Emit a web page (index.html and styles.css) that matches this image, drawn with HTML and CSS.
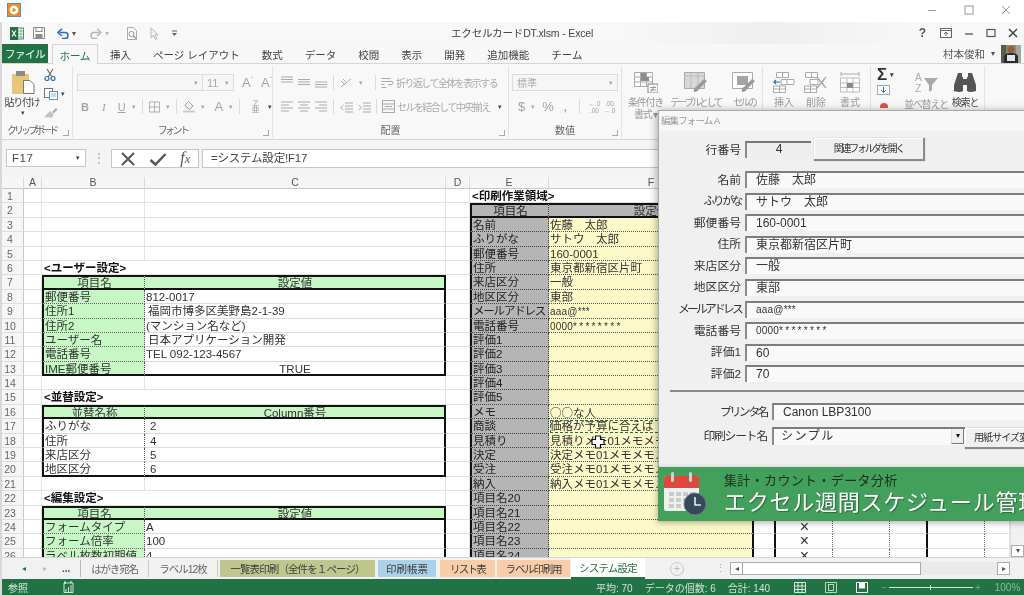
FILE: index.html
```html
<!DOCTYPE html>
<html lang="ja">
<head>
<meta charset="utf-8">
<title>エクセルカードDT.xlsm - Excel</title>
<link rel="stylesheet" href="styles.css">
</head>
<body>
<div class="app">
  <header class="topbar">
    <svg class="appicon" width="14" height="14" viewBox="0 0 14 14"><rect x=".5" y=".5" width="13" height="13" fill="#f08a24" stroke="#5a8fc0"/><circle cx="7" cy="7" r="4.4" fill="#fff"/><path d="M5.6 4.6 9.4 7 5.6 9.4z" fill="#f08a24"/></svg>
    <div class="wincontrols">
      <svg width="10" height="10" viewBox="0 0 10 10"><path d="M1 5.5h8" stroke="#999"/></svg>
      <svg width="10" height="10" viewBox="0 0 10 10"><rect x="1" y="1" width="8" height="8" fill="none" stroke="#999"/></svg>
      <svg width="10" height="10" viewBox="0 0 10 10"><path d="M1 1l8 8M9 1l-8 8" stroke="#999"/></svg>
    </div>
  </header>

  <main class="excel">
    <div class="qat">
      <svg class="q-xl" width="14" height="13" viewBox="0 0 14 13"><rect x="5" y="1" width="8.5" height="11" fill="#fff" stroke="#217346" stroke-width=".8"/><path d="M8 1v11M11 1v11M5 4h8M5 7h8M5 10h8" stroke="#217346" stroke-width=".5"/><rect x="0" y="0" width="8" height="13" fill="#217346"/><path d="M2 3.5l4 6M6 3.5l-4 6" stroke="#fff" stroke-width="1.2"/></svg>
      <svg class="q-save" width="12" height="12" viewBox="0 0 12 12"><path d="M.5.5h11v11H.5z" fill="none" stroke="#8c8c8c"/><rect x="3" y=".5" width="6" height="4" fill="none" stroke="#8c8c8c"/><rect x="2.5" y="7" width="7" height="4.5" fill="#8c8c8c"/></svg>
      <svg class="q-undo" width="12" height="11" viewBox="0 0 12 11"><path d="M2.5 4.5H8a3 3 0 0 1 0 6H5" fill="none" stroke="#2a6fb0" stroke-width="1.6"/><path d="M5 .8 1 4.5 5 8" fill="none" stroke="#2a6fb0" stroke-width="1.6"/></svg>
      <span class="q-arrow dark">▾</span>
      <svg class="q-redo" width="12" height="11" viewBox="0 0 12 11"><path d="M9.5 4.5H4a3 3 0 0 0 0 6h3" fill="none" stroke="#b5b5b5" stroke-width="1.4"/><path d="M7 .8l4 3.7L7 8" fill="none" stroke="#b5b5b5" stroke-width="1.4"/></svg>
      <span class="q-arrow">▾</span>
      <svg class="q-prev" width="12" height="13" viewBox="0 0 12 13"><path d="M1.5.5h6l3 3v9h-9z" fill="none" stroke="#aaa"/><circle cx="5.5" cy="7" r="2.6" fill="none" stroke="#999"/><path d="M7.5 9l2.500 2.500" stroke="#999" stroke-width="1.400"/></svg>
      <svg class="q-cur" width="9" height="13" viewBox="0 0 9 13"><path d="M1 .8v10l2.500-2.300 2 4 1.400-.8-2-3.800H8z" fill="#f4f4f4" stroke="#aaa" stroke-width=".8"/></svg>
      <svg class="q-cust" width="7" height="7" viewBox="0 0 7 7"><path d="M1 1h5" stroke="#666"/><path d="M1 3h5L3.500 6z" fill="#666"/></svg>
      <span class="doctitle">エクセルカードDT.xlsm - Excel</span>
      <div class="qat-right">
        <b class="help">?</b>
        <svg width="12" height="10" viewBox="0 0 12 10"><rect x=".5" y=".5" width="11" height="9" fill="none" stroke="#666"/><path d="M.5 2.500h11" stroke="#666"/><path d="M6 8V4.500M4 6l2-2 2 2" fill="none" stroke="#666"/></svg>
        <svg width="10" height="10" viewBox="0 0 10 10"><path d="M1 6h8" stroke="#555" stroke-width="1.300"/></svg>
        <svg width="10" height="10" viewBox="0 0 10 10"><rect x="1" y="1.500" width="8" height="7" fill="none" stroke="#555" stroke-width="1.200"/></svg>
        <svg width="10" height="10" viewBox="0 0 10 10"><path d="M1 1l8 8M9 1l-8 8" stroke="#444" stroke-width="1.500"/></svg>
      </div>
    </div>

    <nav class="tabs">
      <span class="tab-file">ファイル</span>
      <span class="tab tab-on">ホーム</span>
      <span class="tab">挿入</span>
      <span class="tab">ページ レイアウト</span>
      <span class="tab">数式</span>
      <span class="tab">データ</span>
      <span class="tab">校閲</span>
      <span class="tab">表示</span>
      <span class="tab">開発</span>
      <span class="tab">追加機能</span>
      <span class="tab">チーム</span>
      <div class="user">
        <span>村本俊和</span><span class="usr-arrow">▾</span>
        <svg width="20" height="18" viewBox="0 0 20 18"><rect width="20" height="18" fill="#8a8a70"/><rect x="0" width="5" height="18" fill="#55604a"/><rect x="15" width="5" height="18" fill="#a0a8a0"/><circle cx="10" cy="4.500" r="3.500" fill="#8d6244"/><path d="M3 18V11q1-3 7-3t7 3v7z" fill="#2b2b2b"/><rect x="6" y="10" width="8" height="6" fill="#e6e6e6"/></svg>
      </div>
    </nav>

    <section class="ribbon">
      <div class="grp g-clip">
        <div class="grp-body clip">
          <div class="paste">
            <svg width="24" height="23" viewBox="0 0 24 23"><rect x="1" y="3" width="17" height="20" fill="#e8c678"/><rect x="5" y="0" width="9" height="5" fill="#8a8a8a"/><path d="M12.500 9.500h6.500l4 4v9H12.500z" fill="#fff" stroke="#777"/></svg>
            <span class="paste-l">貼り付け</span>
            <span class="mini dark">▾</span>
          </div>
          <div class="clip-tools">
            <svg width="12" height="12" viewBox="0 0 12 12"><path d="M3 0l5 8M9 0 4 8" stroke="#666" stroke-width="1.100"/><circle cx="3" cy="9.500" r="2" fill="none" stroke="#2a6fb0" stroke-width="1.200"/><circle cx="9" cy="9.500" r="2" fill="none" stroke="#2a6fb0" stroke-width="1.200"/></svg>
            <span class="copy"><svg width="14" height="12" viewBox="0 0 14 12"><rect x=".5" y=".5" width="8" height="9" fill="#fff" stroke="#777"/><rect x="5.500" y="3.500" width="8" height="8" fill="#fff" stroke="#5a8fc0"/><path d="M7 6h5M7 8h5" stroke="#5a8fc0" stroke-width=".7"/></svg><span class="mini dark">▾</span></span>
            <svg width="14" height="12" viewBox="0 0 14 12"><path d="M8 5 12 1l1.500 1.500L9.500 6.500z" fill="#aaa"/><path d="M1 9l5-5 4 4-3 3-3-1-2 1z" fill="#c2c2c2"/></svg>
          </div>
        </div>
        <div class="grp-label lab-clip"><span class="tk2">クリップボード</span><i class="launch"></i></div>
      </div>

      <div class="grp g-font">
        <div class="grp-body stack">
          <div class="line">
            <span class="combo c-font"><span class="mini">▾</span></span><span class="combo c-size">11<span class="mini">▾</span></span>
            <span class="glyph big a1">A<sup>ˆ</sup></span><span class="glyph big a2">A<sup>ˇ</sup></span>
          </div>
          <div class="line l2">
            <b class="glyph m-b">B</b><i class="glyph ser m-i">I</i><u class="glyph m-u">U</u><span class="mini m-ua">▾</span><span class="vsep"></span>
            <svg class="m-b2" width="12" height="12" viewBox="0 0 12 12"><path d="M.5.5h11v11H.5zM6 .5v11M.5 6h11" fill="none" stroke="#aaa"/></svg><span class="mini m-a">▾</span><span class="vsep"></span>
            <svg class="m-f" width="14" height="13" viewBox="0 0 14 13"><path d="M6 1l5 5-4 4-5-5z" fill="#eee" stroke="#999"/><rect x="0" y="11" width="13" height="2" fill="#c9c9c9"/></svg><span class="mini m-a">▾</span>
            <span class="glyph big m-c">A</span><span class="mini m-a">▾</span><span class="vsep"></span>
            <span class="ruby"><small>ア</small>亜</span><span class="mini dark m-a">▾</span>
          </div>
        </div>
        <div class="grp-label"><span class="tk2">フォント</span><i class="launch"></i></div>
      </div>

      <div class="grp g-align">
        <div class="grp-body stack">
          <div class="line">
            <svg class="m-al" width="12" height="12" viewBox="0 0 12 12"><path d="M0 1h12M0 3.500h12M0 6h12" stroke="#aaa"/></svg>
            <svg class="m-al" width="12" height="12" viewBox="0 0 12 12"><path d="M0 3.500h12M0 6h12M0 8.500h12" stroke="#aaa"/></svg>
            <svg class="m-al" width="12" height="12" viewBox="0 0 12 12"><path d="M0 6h12M0 8.500h12M0 11h12" stroke="#aaa"/></svg>
            <span class="vsep v2"></span>
            <svg class="m-or" width="13" height="12" viewBox="0 0 13 12"><path d="M1 10 11 2M3 2l3 3M1 4l4 4" stroke="#aaa"/></svg><span class="mini m-a">▾</span>
            <span class="vsep v3"></span>
            <svg class="m-wr" width="13" height="12" viewBox="0 0 13 12"><path d="M.5 1.500h9M.5 4.500h11q1.500 2-1 3H7M.5 7.500h3M.5 10.500h5" fill="none" stroke="#aaa"/></svg>
            <span class="rb-txt">折り返して全体を表示する</span>
          </div>
          <div class="line l2">
            <svg class="m-al" width="12" height="12" viewBox="0 0 12 12"><path d="M0 2h12M0 5h8M0 8h12M0 11h8" stroke="#aaa"/></svg>
            <svg class="m-al" width="12" height="12" viewBox="0 0 12 12"><path d="M0 2h12M2 5h8M0 8h12M2 11h8" stroke="#aaa"/></svg>
            <svg class="m-al" width="12" height="12" viewBox="0 0 12 12"><path d="M0 2h12M4 5h8M0 8h12M4 11h8" stroke="#aaa"/></svg>
            <span class="vsep v2"></span>
            <svg class="m-or" width="13" height="12" viewBox="0 0 13 12"><path d="M5 2h8M5 5h8M5 8h8M5 11h8M3.500 4 .5 6.500l3 2.500" fill="none" stroke="#aaa"/></svg>
            <svg class="m-in" width="13" height="12" viewBox="0 0 13 12"><path d="M5 2h8M5 5h8M5 8h8M5 11h8M.5 4l3 2.500-3 2.500" fill="none" stroke="#aaa"/></svg>
            <span class="vsep v4"></span>
            <svg class="m-wr" width="13" height="13" viewBox="0 0 13 13"><rect x=".5" y=".5" width="12" height="12" fill="none" stroke="#aaa"/><path d="M.5 4h12M.5 9h12M3 6.500h7" stroke="#aaa"/></svg>
            <span class="rb-txt">セルを結合して中央揃え</span><span class="mini dark m-mg">▾</span>
          </div>
        </div>
        <div class="grp-label">配置<i class="launch"></i></div>
      </div>

      <div class="grp g-num">
        <div class="grp-body stack">
          <div class="line"><span class="combo c-num">標準<span class="mini">▾</span></span></div>
          <div class="line l2 nums">
            <span class="glyph big">$</span><span class="mini n-a">▾</span><span class="glyph big n-p">%</span><b class="glyph n-c">,</b><span class="vsep n-s"></span>
            <span class="dec">←.0<br>.00</span><span class="dec">.00<br>→.0</span>
          </div>
        </div>
        <div class="grp-label">数値<i class="launch"></i></div>
      </div>

      <div class="grp g-style">
        <div class="big-btns">
          <div class="bbtn b-c">
            <svg width="24" height="21" viewBox="0 0 24 21"><path d="M.5.5h18v14H.5zM6.500.5v14M12.500.5v14M.5 5h18M.5 10h18" fill="#fff" stroke="#aaa"/><rect x="7" y="1" width="5" height="4" fill="#8d8d8d"/><rect x="7" y="5" width="8" height="4" fill="#8d8d8d"/><rect x="14" y="12" width="10" height="9" fill="#f7f7f7" stroke="#888"/><path d="M16 15.500h6M16 18h6M20.500 14l-3 5.500" stroke="#777" stroke-width=".7"/></svg>
            <span class="tk1">条件付き<br>書式 ▾</span>
          </div>
          <div class="bbtn b-t">
            <svg width="24" height="21" viewBox="0 0 24 21"><path d="M.5.500h20v16H.5z" fill="#d8d8d8" stroke="#aaa"/><path d="M.5 4h20M7 .5v16M14 .5v16" stroke="#bbb"/><path d="M10 20q4 0 5-3l8-8-3-2-8 8q-3 1-2 5z" fill="#999"/></svg>
            <span class="tk3">テーブルとして</span>
          </div>
          <div class="bbtn b-s">
            <svg width="24" height="21" viewBox="0 0 24 21"><path d="M.5.500h20v16H.5z" fill="#fff" stroke="#aaa"/><rect x="5" y="4" width="11" height="9" fill="#a5a5a5"/><path d="M10 20q4 0 5-3l8-8-3-2-8 8q-3 1-2 5z" fill="#999"/></svg>
            <span class="tk3">セルの</span>
          </div>
        </div>
      </div>

      <div class="grp g-cells">
        <div class="big-btns">
          <div class="bbtn c-i">
            <svg width="22" height="21" viewBox="0 0 22 21"><path d="M3.500.5h12v5h-12zM9.500.5v5M.5 14h12v6.500H.5zM6.500 14v6.500M.5 17h12M8 7.500h13v5H8zM14 7.500v5" fill="#fff" stroke="#aaa"/><path d="M7 10H1M3 8l-2 2 2 2" fill="none" stroke="#2a6fb0" stroke-width="1.200"/></svg>
            <span>挿入</span>
          </div>
          <div class="bbtn c-d">
            <svg width="24" height="21" viewBox="0 0 24 21"><path d="M1.500.5h12v5h-12zM7.500.5v5M.5 14h12v6.500H.5zM6.500 14v6.500M.5 17h12M6 7.500h8v5H6z" fill="#fff" stroke="#aaa"/><path d="M13 5l9 11M22 5l-9 11" stroke="#aaa" stroke-width="1.400"/></svg>
            <span>削除</span>
          </div>
          <div class="bbtn c-f">
            <svg width="22" height="21" viewBox="0 0 22 21"><path d="M1.500 6h19v14h-19zM8 6v14M14 6v14M1.500 11h19M1.500 15.500h19" fill="#fff" stroke="#bbb"/><rect x="8" y="11" width="6" height="5" fill="#8a8a8a"/><path d="M2 2h18M2 0v4M20 0v4" stroke="#aaa"/></svg>
            <span>書式</span>
          </div>
        </div>
      </div>

      <div class="grp g-edit">
        <div class="edit-col">
          <span class="sigma">Σ<span class="mini dark">▾</span></span>
          <svg width="13" height="10" viewBox="0 0 13 10"><rect x=".5" y=".5" width="12" height="9" fill="#fff" stroke="#aaa"/><path d="M6.500 2v5M4 5l2.500 2.500L9 5" fill="none" stroke="#2a6fb0"/></svg>
          <svg class="eraser" width="10" height="6" viewBox="0 0 10 6"><circle cx="5" cy="5" r="4" fill="#d9534f"/></svg>
        </div>
        <div class="bbtn e-s">
          <svg width="24" height="24" viewBox="0 0 24 24"><path d="M10 5h14l-6 7v5l-3 2v-7z" fill="#aaa"/></svg>
          <span class="az">A<br>Z</span>
          <span class="tk1">並べ替えと</span>
        </div>
        <div class="bbtn e-f">
          <svg width="24" height="21" viewBox="0 0 24 21"><path d="M5 1h4v4h1v14q-3 2-9 0l0-6zM19 1h-4v4h-1v14q3 2 9 0v-6z" fill="#555"/><rect x="10" y="7" width="4" height="6" fill="#555"/></svg>
          <span class="tk1">検索と</span>
        </div>
      </div>
    </section>

    <section class="fbar">
      <div class="namebox"><span>F17</span><span class="mini dark">▾</span></div>
      <span class="dots">⋮</span>
      <div class="fbtns">
        <svg width="16" height="14" viewBox="0 0 16 14"><path d="M2 1l12 12M14 1 2 13" stroke="#555" stroke-width="2"/></svg>
        <svg width="18" height="14" viewBox="0 0 18 14"><path d="M1.500 8l5 4.500L16.500 2" fill="none" stroke="#555" stroke-width="2.500"/></svg>
        <span class="fx"><i>f</i><i class="x">x</i></span>
      </div>
      <div class="finput">=システム設定!F17</div>
    </section>

    <section class="sheetwrap">
      <div class="sheet">
        <div class="row chead"><span class="corner"></span><span>A</span><span>B</span><span>C</span><span>D</span><span>E</span><span>F</span><span></span><span></span><span></span><span></span><span></span><span></span></div>

        <div class="row"><span class="rh">1</span><span></span><span></span><span></span><span></span><span class="bold ov">&lt;印刷作業領域&gt;</span><span></span></div>
        <div class="row"><span class="rh">2</span><span></span><span></span><span></span><span></span><span class="el eh">項目名</span><span class="ev eh">設定値</span></div>
        <div class="row"><span class="rh">3</span><span></span><span></span><span></span><span></span><span class="el">名前</span><span class="ev">佐藤　太郎</span></div>
        <div class="row"><span class="rh">4</span><span></span><span></span><span></span><span></span><span class="el">ふりがな</span><span class="ev">サトウ　太郎</span></div>
        <div class="row"><span class="rh">5</span><span></span><span></span><span></span><span></span><span class="el">郵便番号</span><span class="ev">160-0001</span></div>
        <div class="row"><span class="rh">6</span><span></span><span class="bold ov">&lt;ユーザー設定&gt;</span><span></span><span></span><span class="el">住所</span><span class="ev">東京都新宿区片町</span></div>
        <div class="row"><span class="rh">7</span><span></span><span class="gl gh">項目名</span><span class="gv gh">設定値</span><span></span><span class="el">来店区分</span><span class="ev">一般</span></div>
        <div class="row"><span class="rh">8</span><span></span><span class="gl">郵便番号</span><span class="gv">812-0017</span><span></span><span class="el">地区区分</span><span class="ev">東部</span></div>
        <div class="row"><span class="rh">9</span><span></span><span class="gl">住所1</span><span class="gv ind">福岡市博多区美野島2-1-39</span><span></span><span class="el tight">メールアドレス</span><span class="ev sm">aaa@***</span></div>
        <div class="row"><span class="rh">10</span><span></span><span class="gl">住所2</span><span class="gv">(マンション名など)</span><span></span><span class="el">電話番号</span><span class="ev sm">0000<span class="stars">********</span></span></div>
        <div class="row"><span class="rh">11</span><span></span><span class="gl">ユーザー名</span><span class="gv ind">日本アプリケーション開発</span><span></span><span class="el">評価1</span><span class="ev"></span></div>
        <div class="row"><span class="rh">12</span><span></span><span class="gl">電話番号</span><span class="gv">TEL 092-123-4567</span><span></span><span class="el">評価2</span><span class="ev"></span></div>
        <div class="row"><span class="rh">13</span><span></span><span class="gl end">IME郵便番号</span><span class="gv end ctr">TRUE</span><span></span><span class="el">評価3</span><span class="ev"></span></div>
        <div class="row"><span class="rh">14</span><span></span><span></span><span></span><span></span><span class="el">評価4</span><span class="ev"></span></div>
        <div class="row"><span class="rh">15</span><span></span><span class="bold ov">&lt;並替設定&gt;</span><span></span><span></span><span class="el">評価5</span><span class="ev"></span></div>
        <div class="row"><span class="rh">16</span><span></span><span class="gl gh">並替名称</span><span class="gv gh">Column番号</span><span></span><span class="el">メモ</span><span class="ev cjk">○○な人</span></div>
        <div class="row"><span class="rh">17</span><span></span><span class="wl">ふりがな</span><span class="gv ind2">2</span><span></span><span class="el">商談</span><span class="ev ants">価格が予算に合えば</span></div>
        <div class="row"><span class="rh">18</span><span></span><span class="wl">住所</span><span class="gv ind2">4</span><span></span><span class="el">見積り</span><span class="ev">見積りメモ01メモメモメモ</span></div>
        <div class="row"><span class="rh">19</span><span></span><span class="wl">来店区分</span><span class="gv ind2">5</span><span></span><span class="el">決定</span><span class="ev">決定メモ01メモメモメモ</span></div>
        <div class="row"><span class="rh">20</span><span></span><span class="wl end">地区区分</span><span class="gv end ind2">6</span><span></span><span class="el">受注</span><span class="ev">受注メモ01メモメモメモ</span></div>
        <div class="row"><span class="rh">21</span><span></span><span></span><span></span><span></span><span class="el">納入</span><span class="ev">納入メモ01メモメモメモ</span></div>
        <div class="row"><span class="rh">22</span><span></span><span class="bold ov">&lt;編集設定&gt;</span><span></span><span></span><span class="el">項目名20</span><span class="ev"></span></div>
        <div class="row"><span class="rh">23</span><span></span><span class="gl gh">項目名</span><span class="gv gh">設定値</span><span></span><span class="el">項目名21</span><span class="ev"></span></div>
        <div class="row"><span class="rh">24</span><span></span><span class="gl">フォームタイプ</span><span class="gv">A</span><span></span><span class="el">項目名22</span><span class="ev"></span><span class="kb"></span><span class="kc">×</span><span class="kd"></span><span class="ke"></span><span class="kf"></span><span></span></div>
        <div class="row"><span class="rh">25</span><span></span><span class="gl">フォーム倍率</span><span class="gv">100</span><span></span><span class="el">項目名23</span><span class="ev"></span><span class="kb"></span><span class="kc">×</span><span class="kd"></span><span class="ke"></span><span class="kf"></span><span></span></div>
        <div class="row"><span class="rh">26</span><span></span><span class="gl">ラベル枚数初期値</span><span class="gv">4</span><span></span><span class="el">項目名24</span><span class="ev"></span><span class="kb"></span><span class="kc">×</span><span class="kd"></span><span class="ke"></span><span class="kf"></span><span></span></div>
      </div>
      <div class="vscroll"><span class="vs-down">▾</span></div>
    </section>

    <section class="sheettabs">
      <div class="nav"><span class="nav-l">◂</span><span class="nav-r">▸</span><span class="nav-d">...</span></div>
      <span class="st st-1">はがき宛名</span>
      <span class="st st-2">ラベル12枚</span>
      <span class="st st-3">一覧表印刷（全件を１ページ）</span>
      <span class="st st-4">印刷帳票</span>
      <span class="st st-5">リスト表</span>
      <span class="st st-6">ラベル印刷用</span>
      <span class="st st-7">システム設定</span>
      <span class="st-add">+</span>
      <span class="st-dots">⋮</span>
      <div class="hscroll"><span class="hs-btn">◂</span><span class="hs-thumb"></span><span class="hs-btn end-btn">▸</span></div>
    </section>

    <footer class="status">
      <span class="s-ref">参照</span>
      <svg class="s-mac" width="11" height="12" viewBox="0 0 11 12"><path d="M1 2h9v9.500H1z" fill="none" stroke="#cfe3d6"/><path d="M3 8v3M5.500 6v5M8 4v7" stroke="#cfe3d6"/><path d="M2 0v3M8 0v2" stroke="#fff"/></svg>
      <span class="s-sum s-a">平均: 70</span><span class="s-sum">データの個数: 6</span><span class="s-sum">合計: 140</span>
      <svg class="s-v1" width="12" height="11" viewBox="0 0 12 11"><path d="M.5.5h11v10H.5zM4 .5v10M8 .5v10M.5 4h11M.5 7.500h11" fill="none" stroke="#dbe9e0"/></svg>
      <svg class="s-v2" width="12" height="11" viewBox="0 0 12 11"><path d="M.5.5h11v10H.5z" fill="none" stroke="#bcd5c6"/><rect x="3.500" y="2.500" width="5" height="6" fill="none" stroke="#bcd5c6"/></svg>
      <svg class="s-v3" width="12" height="11" viewBox="0 0 12 11"><path d="M.5.5h11v10H.5z" fill="#217346" stroke="#fff"/><rect x="3" y=".5" width="6" height="6" fill="#fff"/></svg>
      <div class="zoom"><span>−</span><span class="z-line"><i></i></span><span>+</span></div>
      <span class="s-pct">100%</span>
    </footer>
  </main>

  <aside class="form">
    <div class="form-title">編集フォーム A</div>
    <div class="form-body">
      <div class="frow f-first"><label>行番号</label><span class="field ro">4</span><span class="btn b-folder">関連フォルダを開く</span></div>
      <div class="frow"><label>名前</label><span class="field">佐藤　太郎</span></div>
      <div class="frow"><label class="tk-kana">ふりがな</label><span class="field">サトウ　太郎</span></div>
      <div class="frow"><label>郵便番号</label><span class="field">160-0001</span></div>
      <div class="frow"><label>住所</label><span class="field">東京都新宿区片町</span></div>
      <div class="frow"><label>来店区分</label><span class="field">一般</span></div>
      <div class="frow"><label>地区区分</label><span class="field">東部</span></div>
      <div class="frow"><label class="tk-mail">メールアドレス</label><span class="field sm">aaa@***</span></div>
      <div class="frow"><label>電話番号</label><span class="field sm">0000<span class="stars">********</span></span></div>
      <div class="frow"><label>評価1</label><span class="field">60</span></div>
      <div class="frow f-last"><label>評価2</label><span class="field">70</span></div>
      <hr class="fsep">
      <div class="frow f-p"><label class="tk-print">プリンタ名</label><span class="field">Canon LBP3100</span></div>
      <div class="frow f-p f-s"><label class="tk-sheet">印刷シート名</label><span class="field f-combo">シンプル<span class="drop">▾</span></span><span class="btn b-paper">用紙サイズ変更</span></div>
    </div>
  </aside>

  <aside class="banner">
    <svg width="44" height="44" viewBox="0 0 44 44"><rect x="1" y="4" width="35" height="35" rx="2" fill="#eef0ee"/><path d="M1 6a2 2 0 0 1 2-2h31a2 2 0 0 1 2 2v10H1z" fill="#e0483e"/><rect x="8" y="0" width="3" height="10" rx="1.500" fill="#cfd3d0"/><rect x="26" y="0" width="3" height="10" rx="1.500" fill="#cfd3d0"/><path d="M6 20h5v4H6zM13 20h5v4h-5zM20 20h5v4h-5zM27 20h5v4h-5zM6 26h5v4H6zM13 26h5v4h-5zM20 26h5v4h-5zM6 32h5v4H6zM13 32h5v4h-5z" fill="#c9cdca"/><circle cx="32" cy="32" r="11" fill="#36485c" stroke="#6f7f88"/><path d="M32 25v8h6" fill="none" stroke="#e8ecee" stroke-width="1.600"/></svg>
    <div class="b-text"><div class="b-small">集計・カウント・データ分析</div><div class="b-large">エクセル週間スケジュール管理</div></div>
  </aside>

  <svg class="cellcursor" width="14" height="14" viewBox="0 0 14 14"><path d="M4.500 1h5v3.500H13v5H9.500V13h-5V9.500H1v-5h3.500z" fill="#fff" stroke="#111" stroke-width="1.200"/></svg>
</div>
</body>
</html>
```

FILE: styles.css
```css
* { box-sizing: border-box; }
html, body { margin: 0; padding: 0; height: 100%; overflow: hidden; background: #fff; }
body { font-family: "Liberation Sans", "Noto Sans CJK JP", sans-serif; font-size: 10px; color: #444; }

.app { position: relative; width: 1024px; height: 595px; overflow: hidden; display: flex; flex-direction: column; filter: blur(.45px); }

/* outer window bar */
.topbar { height: 22px; background: #fff; display: flex; align-items: center; flex: none; }
.appicon { margin-left: 7px; margin-top: -2px; }
.wincontrols { margin-left: auto; display: flex; gap: 27px; margin-right: 13px; margin-top: -2px; }

.excel { flex: 1; display: flex; flex-direction: column; min-height: 0; border-left: 2px solid #d8d8d8; background: #f7f7f7; }

/* quick access */
.qat { height: 22px; flex: none; display: flex; align-items: center; position: relative; background: linear-gradient(90deg, #f8f8f8 60%, #efefef 75%, #f8f8f8 90%); }
.qat > svg, .qat > span { flex: none; }
.q-xl { margin-left: 8px; }
.q-save { margin-left: 9px; }
.q-undo { margin-left: 12px; }
.q-arrow { font-size: 8px; margin-left: 3px; color: #bbb; width: 8px; }
.q-arrow.dark { color: #555; }
.q-redo { margin-left: 10px; }
.q-prev { margin-left: 13px; }
.q-cur { margin-left: 12px; }
.q-cust { margin-left: 12px; }
.doctitle { position: absolute; left: 449px; top: 4px; font-size: 10.500px; line-height: 15px; color: #444; letter-spacing: -.15px; }
.qat-right { margin-left: auto; display: flex; align-items: center; gap: 12px; margin-right: 6px; }
.help { font-size: 12px; color: #555; margin-right: 2px; }

/* ribbon tabs */
.tabs { height: 20px; flex: none; display: flex; align-items: stretch; font-size: 10.500px; border-bottom: 1px solid #d5d5d5; position: relative; }
.tab-file { width: 46px; background: #217346; color: #fff; display: flex; align-items: center; justify-content: center; margin-right: 4px; letter-spacing: -.5px; }
.tab { padding: 2px 11px 0; margin-right: 0; line-height: 16px; color: #444; white-space: nowrap; display: flex; align-items: center; }
.tab-on { width: 46px; padding: 2px 0 0; justify-content: center; color: #217346; background: #f7f7f7; border: 1px solid #d5d5d5; border-bottom: 0; margin-bottom: -1px; margin-right: 1px; }
.user { margin-left: auto; display: flex; align-items: center; margin-right: 3px; color: #555; }
.usr-arrow { margin: 0 6px; font-size: 8px; }

/* ribbon */
.ribbon { height: 76px; flex: none; display: flex; background: #f8f8f8; border-bottom: 1px solid #d5d5d5; color: #a0a0a0; }
.grp { flex: none; display: flex; flex-direction: column; position: relative; border-right: 1px solid #e2e2e2; margin: 2px 0 1px; }
.g-clip { width: 71px; } .g-font { width: 200px; } .g-align { width: 236px; }
.g-num { width: 113px; } .g-style { width: 141px; } .g-cells { width: 108px; }
.g-edit { width: 114px; flex-direction: row; }
.grp-body { flex: 1; min-height: 0; }
.grp-label { height: 14px; line-height: 14px; text-align: center; font-size: 10px; color: #666; position: relative; white-space: nowrap; }
.lab-clip { text-align: left; padding-left: 5px; }
.tk2 { letter-spacing: -2.600px; }
.lab-clip .tk2 { letter-spacing: -3px; }
.tk1 { letter-spacing: -1.200px; }
.tk3 { letter-spacing: -2.600px; }
.launch { position: absolute; right: 3px; bottom: 2px; width: 6px; height: 6px; border-left: 1px solid #aaa; border-bottom: 1px solid #aaa; transform: scaleX(-1); }
.mini { font-size: 7px; color: #aaa; font-style: normal; }
.mini.dark { color: #444; }

.clip { display: flex; }
.paste { width: 40px; display: flex; flex-direction: column; align-items: center; padding-top: 5px; padding-left: 2px; }
.paste-l { font-size: 10px; color: #444; margin-top: 2px; line-height: 13px; letter-spacing: -1.200px; white-space: nowrap; margin-left: -2px; }
.paste .mini { line-height: 8px; }
.clip-tools { display: flex; flex-direction: column; gap: 7px; padding: 3px 0 0 2px; }
.copy { display: flex; align-items: center; gap: 3px; }

.stack { display: flex; flex-direction: column; padding-top: 8px; }
.line { display: flex; align-items: center; height: 17px; flex: none; }
.line.l2 { margin-top: 7px; }
.combo { height: 17px; border: 1px solid #dcdcdc; background: #f6f6f6; display: flex; align-items: center; justify-content: space-between; padding: 0 4px; color: #aaa; font-size: 11px; }
.c-font { width: 125px; margin-left: 4px; justify-content: flex-end; border-right: 0; }
.c-size { width: 32px; }
.glyph { font-size: 11px; color: #a4a4a4; }
.glyph.big { font-size: 13px; }
.ser { font-family: "Liberation Serif", serif; }
sup { font-size: 7px; line-height: 0; }
.a1 { margin-left: 8px; } .a2 { margin-left: 8px; }
.m-b { margin-left: 8px; } .m-i { margin-left: 13px; } .m-u { margin-left: 12px; }
.m-ua { margin-left: 6px; }
.vsep { width: 1px; height: 15px; background: #dcdcdc; margin: 0 6px; flex: none; }
.m-a { margin-left: 6px; }
.m-c { margin-left: 9px; }
.ruby { font-size: 8px; line-height: 8px; width: 14px; margin-left: 3px; display: flex; flex-direction: column; align-items: center; color: #999; }
.ruby small { font-size: 6px; line-height: 6px; }
.g-align .m-al { margin-left: 5px; flex: none; margin-top: -2px; }
.g-align .m-al:first-child { margin-left: 8px; }
.v2 { margin: 0 6px 0 6px; }
.m-or { flex: none; }
.m-in { flex: none; margin-left: 5px; }
.v3 { margin: 0 5px 0 12px; }
.v4 { margin: 0 5px 0 5px; }
.m-wr { flex: none; }
.rb-txt { margin-left: 2px; font-size: 10px; color: #aaa; white-space: nowrap; letter-spacing: -1.550px; }
.m-mg { margin-left: 8px; }
.c-num { width: 106px; margin-left: 3px; font-size: 10px; }
.nums { padding-left: 9px; }
.n-a { margin-left: 6px; } .n-p { margin-left: 7px; } .n-c { margin-left: 10px; }
.n-s { margin: 0 7px 0 12px; }
.dec { font-size: 6.500px; line-height: 7px; width: 15px; text-align: center; }

.big-btns { display: flex; height: 100%; }
.bbtn { display: flex; flex-direction: column; align-items: center; padding-top: 6px; position: relative; color: #999; font-size: 10px; line-height: 12px; text-align: center; white-space: nowrap; flex: none; }
.bbtn > span:last-child { margin-top: 4px; }
.b-c { width: 43px; margin-left: 2px; } .b-t { width: 57px; } .b-s { width: 30px; margin-left: 5px; }
.c-i { width: 26px; margin-left: 8px; } .c-d { width: 30px; margin-left: 4px; } .c-f { width: 26px; margin-left: 6px; }
.edit-col { width: 30px; display: flex; flex-direction: column; align-items: flex-start; padding: 1px 0 0 6px; gap: 2px; position: relative; }
.sigma { font-size: 17px; line-height: 16px; color: #333; font-weight: bold; white-space: nowrap; }
.sigma .mini { margin-left: 3px; vertical-align: 3px; }
.eraser { margin: 5px 0 0 2px; }
.e-s { width: 46px; margin-left: 2px; }
.e-s svg { margin-top: 1px; margin-bottom: -4px; }
.az { position: absolute; left: 12px; top: 6px; font-size: 10px; line-height: 11px; color: #aaa; }
.e-f { width: 32px; color: #444; }
.e-s > span:last-child { margin-top: 6px; }

/* formula bar */
.fbar { height: 37px; flex: none; display: flex; padding: 9px 0 0 4px; background: #f4f4f4; align-items: flex-start; font-size: 11.500px; }
.namebox { width: 80px; height: 18px; border: 1px solid #c6c6c6; background: #fff; display: flex; align-items: center; justify-content: space-between; padding: 0 5px; color: #444; letter-spacing: .5px; }
.dots { width: 25px; text-align: center; color: #aaa; line-height: 18px; }
.fbtns { width: 88px; height: 19px; border: 1px solid #c6c6c6; background: #fff; display: flex; align-items: center; justify-content: space-between; padding: 0 8px; }
.fx { font-family: "Liberation Serif", serif; font-size: 16px; color: #555; line-height: 16px; white-space: nowrap; }
.fx .x { font-size: 12px; }
.finput { flex: 1; height: 19px; margin-left: 3px; background: #fff; border: 1px solid #c6c6c6; border-right: 0; line-height: 17px; padding-left: 8px; color: #444; letter-spacing: -.2px; }

/* sheet */
.sheetwrap { flex: 1; min-height: 0; display: flex; overflow: hidden; background: #fff; }
.sheet { flex: 1; display: grid; grid-template-columns: 22px 18px 103px 301px 24px 79px 205px 22px 57px 57px 38px 57px 25px; grid-template-rows: 12px; grid-auto-rows: 14.400px; font-size: 11.500px; color: #333; line-height: 15px; align-content: start; }
.row { display: contents; }
.row > span { border-right: 1px solid #e3e3e3; border-bottom: 1px solid #e3e3e3; white-space: nowrap; overflow: hidden; padding-left: 1px; min-width: 0; }
.row > span:first-child { grid-column: 1; }
.chead > span { background: #f6f6f6; border-bottom: 1px solid #c8c8c8; border-right: 1px solid #dadada; text-align: center; font-size: 10.500px; line-height: 11px; color: #555; padding: 0; }
.corner { position: relative; }
.row > .rh { background: #f6f6f6; border-right: 1px solid #c8c8c8; border-bottom: 1px solid #dedede; text-align: center; font-size: 10.500px; color: #666; padding: 0 5px 0 0; }
.row > .bold { font-weight: bold; color: #111; }
.row > .ov { overflow: visible; border-right-color: transparent; padding-left: 2px; }
.row > .gl, .row > .wl { border-left: 2px solid #111; border-right: 1px dotted #555; }
.row > .gl { background: #c6f7c4; border-bottom: 1px dotted #666; }
.row > .wl { border-bottom: 1px solid #dcdcdc; }
.row > .gv { border-right: 2px solid #111; border-bottom: 1px solid #dcdcdc; }
.row > .gh { background: #c6f7c4; border-top: 2px solid #111; border-bottom: 2px solid #111; text-align: center; line-height: 12px; }
.row > .end { border-bottom: 2px solid #111; }
.row > .ind { padding-left: 3px; }
.row > .ind2 { padding-left: 5px; }
.row > .ctr { text-align: center; }
.row > .el { border-left: 2px solid #111; border-right: 1px dotted #444; border-bottom: 1px dotted #444; background: #b5b5b5; color: #222; }
.row > .tight { letter-spacing: -1.200px; }
.row > .ev { background: #fdfac9; border-right: 2px solid #111; border-bottom: 1px dotted #555; }
.row > .eh { border-top: 2px solid #111; border-bottom: 2px solid #111; text-align: center; line-height: 12px; }
.row > .ev.eh { background: #b5b5b5; }
.row > .sm { font-size: 10px; letter-spacing: .2px; }
.stars { letter-spacing: 2.300px; }
.row > .cjk { font-family: "Noto Sans CJK JP", sans-serif; }
.row > .ants { outline: 1.500px dashed #217346; outline-offset: -2px; border-bottom: 0; }
.row > .kb { border-right: 2px solid #111; }
.row > .kc { text-align: center; font-size: 16px; color: #333; line-height: 13px; border-right: 1px dotted #666; }
.row > .kd { border-right: 1px dotted #666; }
.row > .ke { border-right: 2px solid #111; }
.row > .kf { border-right: 1px dotted #666; }

.vscroll { width: 14px; flex: none; background: #f1f1f1; border-left: 1px solid #dedede; display: flex; flex-direction: column; justify-content: flex-end; }
.vs-down { height: 12px; background: #fff; border: 1px solid #ababab; font-size: 8px; line-height: 10px; text-align: center; color: #555; }

/* sheet tabs */
.sheettabs { height: 22px; flex: none; display: flex; align-items: stretch; background: #f1f1f1; border-top: 1px solid #d5d5d5; padding-top: 2px; padding-bottom: 2px; font-size: 10.500px; color: #666; }
.nav { width: 79px; display: flex; align-items: center; font-size: 8px; color: #9ab; border-right: 1px solid #bbb; margin: 0; position: relative; }
.nav-l { margin-left: 20px; color: #217346; } .nav-r { margin-left: 17px; color: #bbb; }
.nav-d { margin-left: 15px; color: #217346; font-weight: bold; font-size: 10px; }
.st { display: flex; align-items: center; justify-content: center; white-space: nowrap; flex: none; }
.st-1 { width: 68px; border-right: 1px solid #c8c8c8; letter-spacing: -1.200px; }
.st-2 { width: 69px; border-right: 1px solid #c8c8c8; letter-spacing: -1px; }
.st-3 { width: 155px; margin-left: 2px; background: #bfc78f; color: #3e3e3e; letter-spacing: -.9px; }
.st-4 { width: 58px; margin-left: 3px; background: #a9d3e8; color: #3e3e3e; }
.st-5 { width: 55px; margin-left: 4px; background: #f9cda8; color: #3e3e3e; letter-spacing: -1.800px; }
.st-6 { width: 73px; margin-left: 2px; background: #f9cda8; color: #3e3e3e; letter-spacing: -1.200px; }
.st-7 { width: 74px; margin-left: 1px; background: #fff; color: #217346; border-bottom: 2px solid #217346; margin-top: -2px; margin-bottom: -2px; letter-spacing: -.8px; }
.st-add { width: 14px; height: 14px; margin: 2px 0 0 25px; border: 1px solid #c8c8c8; border-radius: 50%; text-align: center; line-height: 11px; color: #bbb; font-size: 11px; flex: none; }
.st-dots { margin-left: 31px; color: #aaa; line-height: 17px; width: 4px; }
.hscroll { position: absolute; left: 730px; width: 280px; height: 13px; margin-top: 2px; display: flex; background: #eaeaea; }
.hs-btn { width: 13px; height: 13px; flex: none; background: #fff; border: 1px solid #ababab; font-size: 8px; line-height: 11px; text-align: center; color: #555; }
.hs-thumb { width: 178px; background: #fff; border: 1px solid #ababab; border-left: 0; }
.end-btn { margin-left: auto; }

/* status */
.status { height: 16px; flex: none; background: #217346; color: #cfe3d6; display: flex; align-items: center; font-size: 10px; position: relative; }
.s-ref { margin-left: 6px; }
.s-mac { margin-left: 35px; }
.s-sum { margin-right: 12px; white-space: nowrap; }
.s-a { margin-left: 522px; }
.s-v1 { margin-left: 12px; } .s-v2 { margin-left: 19px; } .s-v3 { margin-left: 19px; }
.zoom { display: flex; align-items: center; margin-left: 13px; gap: 2px; color: #6fa386; }
.z-line { width: 84px; height: 1px; background: #cfe3d6; position: relative; }
.z-line i { position: absolute; left: 41px; top: -2px; width: 1px; height: 5px; background: #cfe3d6; }
.s-pct { margin-left: 14px; color: #8fb8a1; }

/* dialog */
.form { position: absolute; left: 658px; top: 110px; width: 380px; height: 357px; background: #f0f0f0; box-shadow: -1px 1px 8px rgba(0,0,0,.35); border-left: 1px solid #aaa; border-top: 1px solid #aaa; font-size: 12px; color: #333; }
.form-title { height: 20px; line-height: 20px; padding-left: 2px; background: #f7f7f7; color: #999; font-size: 9.500px; letter-spacing: -.9px; }
.form-body { padding-top: 10px; }
.frow { display: flex; align-items: center; height: 17px; margin-bottom: 4.600px; }
.frow label { width: 82px; margin-right: 4px; text-align: right; white-space: nowrap; flex: none; font-size: 11.800px; margin-top: -3px; }
.tk-kana { letter-spacing: -2.400px; }
.tk-mail { letter-spacing: -2.800px; }
.f-p .tk-print { letter-spacing: -2.400px; }
.f-p .tk-sheet { letter-spacing: -1.200px; }
.field { flex: 1; height: 17px; background: #f9f9f9; border-top: 2px solid #7d7d7d; border-left: 2px solid #8a8a8a; padding-left: 9px; line-height: 14px; white-space: nowrap; color: #333; }
.field.sm { font-size: 10px; letter-spacing: .2px; }
.field.ro { flex: none; width: 66px; background: #eee; text-align: center; padding: 0; border-top-color: #777; line-height: 12px; }
.btn { flex: none; background: #f0f0f0; border-right: 2px solid #8a8a8a; border-bottom: 2px solid #8a8a8a; box-shadow: inset 1px 1px 0 #fff, 0 0 0 1px #e4e4e4; text-align: center; font-size: 10px; color: #333; white-space: nowrap; }
.b-folder { width: 111px; height: 23px; line-height: 21px; margin-left: 3px; letter-spacing: -2.300px; }
.f-first { margin-bottom: 13px; }
.f-last { margin-bottom: 8px; }
.fsep { margin: 0 0 11px 11px; height: 2px; border: 0; background: #8a8a8a; }
.f-p label { width: 108px; margin-right: 5px; }
.f-p { margin-bottom: 7px; }
.f-s { height: 18px; }
.f-combo { flex: none; width: 193px; height: 18px; position: relative; padding-left: 7px; letter-spacing: 1.500px; }
.drop { position: absolute; right: 1px; top: 0; width: 13px; height: 15px; background: #f0f0f0; border-right: 1px solid #777; border-bottom: 1px solid #777; border-left: 1px solid #ddd; text-align: center; font-size: 8px; line-height: 13px; color: #111; letter-spacing: 0; }
.b-paper { width: 90px; height: 21px; line-height: 20px; margin: 4px 0 0 0; text-align: left; padding-left: 9px; letter-spacing: -.9px; }

/* banner */
.banner { position: absolute; left: 658px; top: 467px; width: 380px; height: 54px; background: #43a05c; box-shadow: -1px 2px 6px rgba(0,0,0,.3); display: flex; align-items: center; padding-left: 5px; overflow: hidden; }
.banner > svg { flex: none; }
.b-text { margin-left: 17px; white-space: nowrap; margin-top: 1px; }
.b-small { font-size: 13px; line-height: 16px; color: #16331f; letter-spacing: .35px; }
.b-large { font-size: 22px; line-height: 28px; color: #fff; letter-spacing: .75px; text-shadow: 1px 1px 1px rgba(0,0,0,.35); }

.cellcursor { position: absolute; left: 591px; top: 435px; }
```
